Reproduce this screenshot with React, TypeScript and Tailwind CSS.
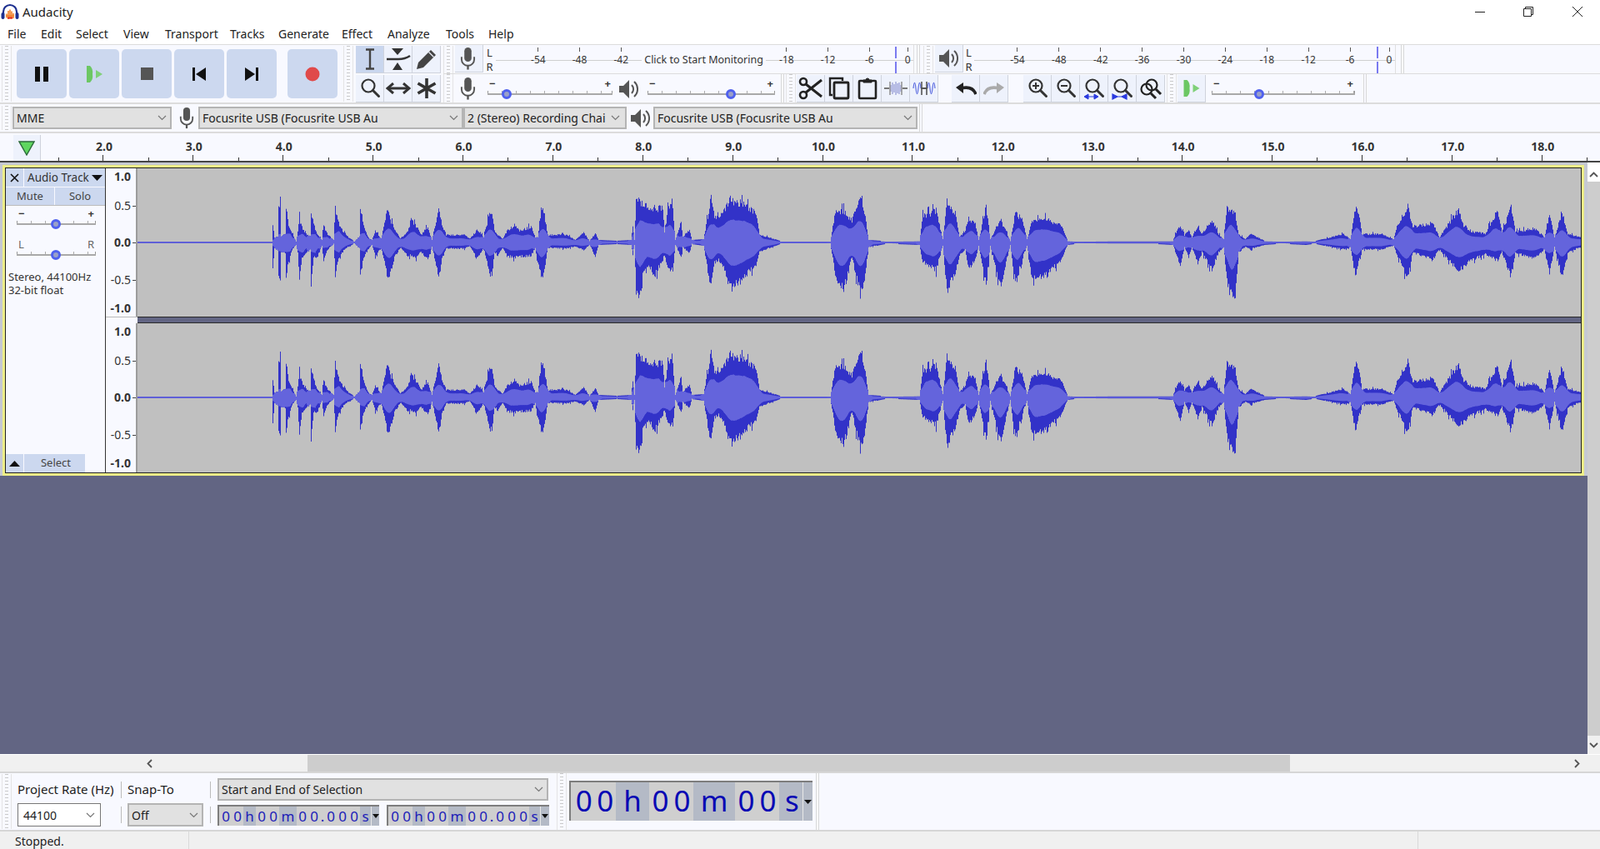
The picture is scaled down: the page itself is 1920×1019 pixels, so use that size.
import React, { useMemo } from "react";

const PTS: number[][] = [
  [0,1,1],[161,1,1],[162,24,31],[164,6,8],[168,8,10],[169,49,48],[171,49,48],[172,8,12],[177,12,14],[178,47,48],[181,22,25],[185,12,10],[190,1,3],[192,15,15],[194,32,46],[197,20,22],[201,12,15],[207,8,10],[208,40,47],[211,25,20],[215,12,20],[221,3,4],[223,23,23],[227,12,10],[235,3,2],[237,46,45],[241,25,20],[249,10,8],[260,1,1],[266,8,8],[267,47,46],[271,22,20],[277,6,8],[281,3,3],
  [285,15,17],[292,5,8],[297,30,28],[300,48,48],[303,30,40],[308,18,20],[315,5,7],[323,13,17],[329,28,18],[335,20,20],[340,10,12],[348,21,23],[353,3,5],[361,45,48],[365,25,23],[370,10,8],[392,10,8],[398,5,5],[408,17,20],[415,7,8],[422,38,40],[425,39,45],[428,15,13],[432,10,17],[438,5,7],[443,15,18],[452,23,20],[458,15,18],[472,21,18],[477,7,7],[480,7,30],[484,45,42],[487,42,45],[492,10,7],[515,10,8],[525,3,5],[535,13,10],[542,2,3],[549,12,18],[553,3,3],[575,2,2],
  [592,3,3],[594,22,16],[596,3,3],[598,60,66],[604,52,68],[606,49,43],[614,47,31],[620,46,44],[630,44,24],[632,14,16],[637,49,38],[642,46,36],[645,3,3],[652,27,19],[654,7,6],[662,17,14],[665,3,2],[679,4,4],[685,41,46],[688,64,54],[692,34,26],[697,31,24],[703,41,34],[711,57,61],[725,51,49],[742,39,29],[746,11,13],[756,7,8],[772,1.5,1.5],[831,1.5,1.5],[837,39,43],[847,41,64],[857,29,19],[867,57,69],[873,36,43],[877,3,6],[899,1.5,1.5],[938,2,3],[942,34,26],[958,42,36],[966,4,4],[971,53,63],[982,31,36],[986,7,16],[993,16,9],[997,32,34],[1005,24,24],[1009,3,4],[1018,47,58],[1023,4,4],[1035,31,59],[1047,2,3],[1053,39,56],[1061,31,23],[1067,4,4],[1073,27,46],[1090,31,44],[1108,22,23],[1116,2,3],[1128,1.5,1.5],
  [1171,2,2],[1188,2,2],[1224,2,2],[1242,2,3],[1248,19,21],[1251,21,31],[1256,9,6],[1261,17,19],[1265,7,6],[1272,23,29],[1277,11,13],[1289,30,36],[1297,11,13],[1303,4,6],[1307,51,49],[1311,41,70],[1317,37,69],[1321,11,13],[1329,4,6],[1335,12,9],[1352,2,3],[1372,1.5,1.5],[1402,2,3],[1412,1.5,1.5],[1447,11,9],[1455,4,6],[1461,44,43],[1465,42,26],[1469,11,9],[1493,11,9],[1507,4,4],[1511,22,16],[1524,47,48],[1530,21,13],[1554,26,23],[1562,7,9],[1585,44,38],[1590,24,33],[1601,14,23],[1617,12,16],[1632,42,24],[1637,14,13],[1648,46,46],[1653,14,14],[1676,19,21],[1688,7,9],[1694,39,43],[1700,6,6],[1709,41,46],[1716,11,13],[1732,7,6],
];

function buildWave() {
  let seed = 12345;
  const rnd = () => {
    seed = (seed * 1103515245 + 12345) & 0x7fffffff;
    return seed / 0x7fffffff;
  };
  const W = 1732;
  const up: number[] = [];
  const down: number[] = [];
  let k = 0;
  for (let x = 0; x < W; x++) {
    while (k < PTS.length - 2 && PTS[k + 1][0] <= x) k++;
    const a = PTS[k];
    const b = PTS[k + 1];
    const t = Math.min(1, (x - a[0]) / Math.max(1, b[0] - a[0]));
    const u = a[1] + (b[1] - a[1]) * t;
    const d = a[2] + (b[2] - a[2]) * t;
    const jag = (v: number) => {
      if (v <= 2) return Math.max(0.8, v * 0.6);
      if (v <= 4) return v;
      const r = rnd();
      const s = r > 0.95 ? 1.15 : 0.8 + 0.2 * rnd();
      return Math.min(v * s, v + 6);
    };
    up.push(jag(u));
    down.push(jag(d));
  }
  const smooth = (arr: number[], i: number) => {
    let s = 0;
    let c = 0;
    for (let j = Math.max(0, i - 5); j <= Math.min(W - 1, i + 5); j++) {
      s += arr[j];
      c++;
    }
    return s / c;
  };
  const cy = 89;
  let outer = "";
  let inner = "";
  for (let i = 0; i < W; i++) {
    outer += `M${i + 0.5} ${(cy - up[i]).toFixed(1)}V${(cy + down[i]).toFixed(1)}`;
    const iu = Math.min(up[i], Math.max(0.8, 0.55 * smooth(up, i)));
    const id = Math.min(down[i], Math.max(0.8, 0.55 * smooth(down, i)));
    inner += `M${i + 0.5} ${(cy - iu).toFixed(1)}V${(cy + id).toFixed(1)}`;
  }
  return { outer, inner };
}

function Wave({ h }: { h: number }) {
  const { outer, inner } = useMemo(buildWave, []);
  return (
    <svg width="1732" height={h} className="block bg-[#c0c0c0]">
      <path d={outer} stroke="#3232c8" strokeWidth="1" fill="none" />
      <path d={inner} stroke="#6464dc" strokeWidth="1" fill="none" />
    </svg>
  );
}

function Grip({ className = "" }: { className?: string }) {
  return (
    <div className={`w-[12px] shrink-0 px-[3px] border-x border-[#e4e4e4] bg-[repeating-linear-gradient(to_bottom,#c9c9c9_0,#c9c9c9_1px,transparent_1px,transparent_4px)] bg-clip-content ${className}`} />
  );
}

function Sep({ className = "" }: { className?: string }) {
  return <div className={`w-[4px] shrink-0 self-stretch border-x border-[#d8d8d8] ${className}`} />;
}

function Transport({ children, className = "" }: { children: React.ReactNode; className?: string }) {
  return <div className={`w-[60px] h-[59px] rounded-[5px] bg-[#ccd8ef] flex items-center justify-center shrink-0 ${className}`}>{children}</div>;
}

function Btn({ children, active, w = "w-[34px]" }: { children: React.ReactNode; active?: boolean; w?: string }) {
  return (
    <div className={`${w} h-[33px] shrink-0 flex items-center justify-center border-b border-r border-[#cfd3dc] ${active ? "bg-[#c9d6ee]" : "bg-[#eef2fc]"}`}>
      {children}
    </div>
  );
}

const Mic = ({ s = 1 }: { s?: number }) => (
  <svg width={20 * s} height={30 * s} viewBox="0 0 20 30" fill="none">
    <rect x="5.5" y="1" width="9" height="18" rx="4.5" fill="#555" />
    <path d="M2 13v3a8 8 0 0 0 16 0v-3" stroke="#555" strokeWidth="2" />
    <path d="M10 24v5" stroke="#555" strokeWidth="2.5" />
  </svg>
);

const Spk = () => (
  <svg width="24" height="26" viewBox="0 0 24 26" fill="none">
    <path d="M1 9h5l7-7v22l-7-7H1z" fill="#555" />
    <path d="M16 8a7 7 0 0 1 0 10M19 4a12 12 0 0 1 0 18" stroke="#555" strokeWidth="2" />
  </svg>
);

const PlayGreen = ({ small }: { small?: boolean }) => (
  <svg width={small ? 22 : 21} height="24" viewBox="0 0 21 24">
    <path d="M1 2h4a8 10 0 0 1 3 10 8 10 0 0 1-3 10H1z" fill="#6cc764" />
    <path d="M12 7l8 5-8 5z" fill="#7fd078" />
  </svg>
);

const Mag = ({ children, under }: { children?: React.ReactNode; under?: React.ReactNode }) => (
  <svg width="28" height="28" viewBox="0 0 28 28" fill="none">
    <circle cx="12" cy="11" r="7.5" stroke="#333" strokeWidth="2.2" />
    <path d="M17.5 16.5l7 7" stroke="#333" strokeWidth="3" strokeLinecap="round" />
    {children}
    {under}
  </svg>
);

function Slider({ w, knob, minus = "−", plus = "+", thin }: { w: number; knob: number; minus?: string; plus?: string; thin?: boolean }) {
  const ticks: number[] = [];
  for (let i = 1; i * 17 < w; i++) ticks.push(i * 17);
  return (
    <div className="flex flex-col shrink-0" style={{ width: w }}>
      <div className={`h-[14px] flex justify-between px-[2px] text-[13px] leading-[14px] ${thin ? "font-normal text-[#666]" : "font-bold text-[#333]"}`}>
        <span>{minus}</span>
        <span>{plus}</span>
      </div>
      <svg width={w} height="13" className="block">
        <path d={`M0.5 2V5M${w - 0.5} 2V5`} stroke="#999" />
        {ticks.map((t) => (
          <path key={t} d={`M${t}.5 2V5`} stroke="#aaa" />
        ))}
        <path d={`M0 6H${w}`} stroke="#a9a9a9" strokeWidth="2" />
        <circle cx={knob} cy="6" r="4.5" fill="#9aa0c8" stroke="#4f60ee" strokeWidth="3" />
      </svg>
    </div>
  );
}

function Meter({ pad, pitch, width, items, gap, label }: { pad: number; pitch: number; width: number; items: string[]; gap: number; label?: boolean }) {
  const Cell = ({ t }: { t: string }) => (
    <div className="flex flex-col items-center shrink-0" style={{ width: pitch }}>
      <div className="w-px h-[5px] mt-[3px] bg-[#555]" />
      <span className="mt-[3px] text-[12px] leading-[14px] text-[#333]">{t}</span>
    </div>
  );
  return (
    <div className="relative flex shrink-0 h-[34px] border-r border-[#e0e0e0]" style={{ width, paddingLeft: pad }}>
      <div className="absolute left-0 right-0 top-[18px] h-px bg-[#cfcfcf]" />
      {items.map((t, i) =>
        t === "LABEL" && label ? (
          <div key={i} className="w-[149px] shrink-0 flex items-center justify-center relative">
            <span className="bg-[#f8f9ff] px-[3px] text-[12.5px] leading-[18px] mt-[1px] text-[#333] whitespace-nowrap">Click to Start Monitoring</span>
          </div>
        ) : (
          <div key={i} className="relative">
            <Cell t={t} />
          </div>
        )
      )}
      <div className="flex flex-col justify-between h-[32px] mt-[2px] shrink-0" style={{ marginLeft: gap }}>
        <div className="w-[2px] h-[14px] bg-[#7a7af0]" />
        <div className="w-[2px] h-[14px] bg-[#7a7af0]" />
      </div>
      <div className="relative flex flex-col items-center w-[20px] ml-[3px] shrink-0">
        <div className="w-px h-[5px] mt-[3px] bg-[#555]" />
        <span className="mt-[3px] text-[12px] leading-[14px] text-[#333]">0</span>
      </div>
    </div>
  );
}

const Chevron = ({ c = "#777" }: { c?: string }) => (
  <svg width="11" height="7" viewBox="0 0 11 7" fill="none" className="shrink-0">
    <path d="M1 1l4.5 4.5L10 1" stroke={c} strokeWidth="1.2" />
  </svg>
);

function Combo({ text, className, pad = "pr-[4px]" }: { text: string; className: string; pad?: string }) {
  return (
    <div className={`flex items-center h-[27px] shrink-0 bg-[#e1e1e1] border-2 border-[#b4b4b4] text-[14px] text-[#222] pl-[3px] ${pad} ${className}`}>
      <span className="flex-1 overflow-hidden whitespace-nowrap">{text}</span>
      <Chevron />
    </div>
  );
}

function VRuler() {
  const Row = ({ t, b, tick, mt }: { t: string; b?: boolean; tick?: boolean; mt: string }) => (
    <div className={`h-[20px] flex items-center justify-end ${mt}`}>
      <span className={`text-[14px] leading-[20px] text-[#333] ${b ? "font-bold" : ""}`}>{t}</span>
      <div className={`w-[4px] h-px ml-[2px] ${tick ? "bg-[#444]" : ""}`} />
    </div>
  );
  return (
    <div className="w-[38px] shrink-0 flex flex-col bg-[#f8f9ff] border-r-2 border-[#9c9c9c]">
      <Row t="1.0" b mt="" />
      <Row t="0.5" tick mt="mt-[15px]" />
      <Row t="0.0" b tick mt="mt-[24px]" />
      <Row t="-0.5" tick mt="mt-[25px]" />
      <Row t="-1.0" b mt="mt-[14px]" />
    </div>
  );
}

function MiniTimer({ className = "" }: { className?: string }) {
  const light = "bg-[#cfcfcf]";
  const dark = "bg-[#b4bac6]";
  const d = "w-[14px] text-center";
  return (
    <div className={`flex h-[25px] shrink-0 border-t-2 border-l-2 border-[#7d7d7d] bg-[#cfcfcf] text-[17px] leading-[23px] text-[#2020b8] ${className}`}>
      <div className={`${light} flex pl-[1px]`}><span className={d}>0</span><span className={d}>0</span></div>
      <div className={`${dark} w-[15px] text-center`}>h</div>
      <div className={`${light} flex`}><span className={d}>0</span><span className={d}>0</span></div>
      <div className={`${dark} w-[21px] text-center`}>m</div>
      <div className={`${light} flex`}><span className={d}>0</span><span className={d}>0</span><span className="w-[6px] text-center">.</span><span className={d}>0</span><span className={d}>0</span><span className={d}>0</span></div>
      <div className={`${dark} w-[13px] text-center`}>s</div>
      <div className={`${dark} flex-1 flex items-center justify-center border-l border-[#e8e8e8]`}>
        <svg width="8" height="5" viewBox="0 0 8 5"><path d="M0 0h8L4 5z" fill="#111" /></svg>
      </div>
    </div>
  );
}

export default function App() {
  const rulerNums = Array.from({ length: 17 }, (_, i) => `${i + 2}.0`);
  return (
    <div className="w-[1920px] h-[1019px] overflow-hidden flex flex-col bg-[#f8f9ff] font-[family-name:'Liberation_Sans',Arial,sans-serif] text-[#222]">
      {/* Title bar */}
      <div className="h-[28px] shrink-0 bg-white flex items-center">
        <svg width="22" height="20" viewBox="0 0 22 20" className="ml-[1px]" fill="none">
          <path d="M3 13V10a8 8 0 0 1 16 0v3" stroke="#1c2f8f" strokeWidth="2.2" />
          <rect x="0.5" y="11" width="4" height="8" rx="2" fill="#1c2f8f" />
          <rect x="17.5" y="11" width="4" height="8" rx="2" fill="#1c2f8f" />
          <path d="M6 15h10M7 12.5v5M9 9v10M11 7.5v11M13 9.5v9M15 12v6" stroke="#f0802a" strokeWidth="1.6" />
          <path d="M8 17.5h6" stroke="#e02a20" strokeWidth="2" />
        </svg>
        <span className="ml-[4px] text-[15px] text-[#222]">Audacity</span>
        <div className="flex-1" />
        <svg width="12" height="12" viewBox="0 0 12 12" className="mr-[46px]"><path d="M0 6.5h12" stroke="#222" /></svg>
        <svg width="12" height="12" viewBox="0 0 12 12" fill="none" className="mr-[47px]"><path d="M2.5 2.5V.5h9v9h-2M.5 2.5h9v9h-9z" stroke="#222" /></svg>
        <svg width="12" height="12" viewBox="0 0 12 12" className="mr-[21px]"><path d="M0 0l12 12M12 0L0 12" stroke="#222" /></svg>
      </div>
      {/* Menu */}
      <div className="h-[26px] shrink-0 bg-white border-b border-[#dcdcdc] relative flex items-center text-[14px] text-[#222]">
        {[
          ["File", "w-[40px] ml-[9px]"],
          ["Edit", "w-[42px]"],
          ["Select", "w-[57px]"],
          ["View", "w-[50px]"],
          ["Transport", "w-[78px]"],
          ["Tracks", "w-[58px]"],
          ["Generate", "w-[76px]"],
          ["Effect", "w-[55px]"],
          ["Analyze", "w-[70px]"],
          ["Tools", "w-[51px]"],
          ["Help", "w-[40px]"],
        ].map(([t, c]) => (
          <span key={t} className={c}>{t}</span>
        ))}
      </div>
      {/* Toolbars */}
      <div className="h-[69px] shrink-0 flex">
        <Grip className="ml-[2px] my-[1px]" />
        <div className="flex items-center ml-[6px] gap-[3px]">
          <Transport>
            <svg width="16" height="18" viewBox="0 0 16 18"><path d="M0 0h6v18H0zM10 0h6v18h-6z" fill="#111" /></svg>
          </Transport>
          <Transport><PlayGreen /></Transport>
          <Transport>
            <svg width="15" height="15"><rect width="15" height="15" fill="#555" /></svg>
          </Transport>
          <Transport>
            <svg width="16" height="16" viewBox="0 0 16 16"><path d="M0 0h3v16H0zM16 0v16L4 8z" fill="#111" /></svg>
          </Transport>
          <Transport>
            <svg width="16" height="16" viewBox="0 0 16 16"><path d="M13 0h3v16h-3zM0 0v16l12-8z" fill="#111" /></svg>
          </Transport>
          <Transport className="ml-[10px]">
            <svg width="18" height="18"><circle cx="9" cy="9" r="8.5" fill="#e04a4a" /></svg>
          </Transport>
        </div>
        <Grip className="ml-[7px] my-[1px]" />
        <div className="ml-[3px] flex flex-col pt-[1px] gap-[2px] shrink-0">
          <div className="flex">
            <Btn active>
              <svg width="16" height="26" viewBox="0 0 16 26" fill="none"><path d="M3 1.5h10M3 24.5h10M8 1.5v23" stroke="#444" strokeWidth="2.4" /></svg>
            </Btn>
            <Btn>
              <svg width="30" height="28" viewBox="0 0 30 28"><path d="M7 1h14l-7 8zM8 27l6-9 6 9z" fill="#333" /><path d="M1 14h14q8 0 14-4" stroke="#333" strokeWidth="2.6" fill="none" /></svg>
            </Btn>
            <Btn>
              <svg width="26" height="26" viewBox="0 0 26 26"><path d="M1 25l2-8L18 2l6 6L9 23z" fill="#444" /><path d="M15.5 4.5l6 6" stroke="#eef2fc" strokeWidth="1.2" /></svg>
            </Btn>
          </div>
          <div className="flex">
            <Btn><Mag /></Btn>
            <Btn>
              <svg width="30" height="14" viewBox="0 0 30 14" fill="none"><path d="M3 7h24" stroke="#333" strokeWidth="3" /><path d="M9 1L2 7l7 6M21 1l7 6-7 6" stroke="#333" strokeWidth="3" /></svg>
            </Btn>
            <Btn>
              <svg width="26" height="26" viewBox="0 0 26 26"><path d="M13 1v24M2.5 7l21 12M23.5 7l-21 12" stroke="#333" strokeWidth="3.6" /></svg>
            </Btn>
          </div>
        </div>
        <div className="ml-[3px] flex-1 flex flex-col min-w-0">
          {/* Row 1 */}
          <div className="h-[35px] shrink-0 flex border-b border-[#dcdcdc]">
            <Grip className="mt-[1px]" />
            <div className="ml-[2px]"><Btn><span className="pr-[2px] flex"><Mic s={0.95} /></span></Btn></div>
            <div className="w-[15px] shrink-0 flex flex-col items-center text-[13px] leading-[17px] pt-[1px] text-[#333]">
              <span>L</span>
              <span>R</span>
            </div>
            <Meter pad={26} pitch={49.7} width={502} gap={6} label items={["-54", "-48", "-42", "LABEL", "-18", "-12", "-6"]} />
            <Sep className="ml-[3px]" />
            <Grip className="ml-[4px] mt-[1px]" />
            <div className="ml-[2px]"><Btn><span className="pr-[2px] flex"><Spk /></span></Btn></div>
            <div className="w-[13px] shrink-0 flex flex-col items-center text-[13px] leading-[17px] pt-[1px] text-[#333]">
              <span>L</span>
              <span>R</span>
            </div>
            <Meter pad={27} pitch={49.9} width={506} gap={7} items={["-54", "-48", "-42", "-36", "-30", "-24", "-18", "-12", "-6"]} />
            <Sep className="ml-[6px]" />
          </div>
          {/* Row 2 */}
          <div className="h-[34px] shrink-0 flex">
            <Grip />
            <div className="w-[34px] ml-[2px] flex items-center justify-center shrink-0 pr-[3px] mt-[1px]"><Mic s={0.95} /></div>
            <div className="ml-[5px] mt-[4px]"><Slider w={150} knob={23} /></div>
            <div className="ml-[7px] flex items-center shrink-0 mt-[1px]"><Spk /></div>
            <div className="ml-[11px] mt-[4px]"><Slider w={153} knob={100} /></div>
            <Sep className="ml-[7px]" />
            <Grip className="ml-[2px]" />
            <div className="ml-[1px] mt-[1px] flex shrink-0">
              <Btn>
                <svg width="30" height="28" viewBox="0 0 30 28" fill="none"><circle cx="6" cy="6" r="4" stroke="#222" strokeWidth="2.6" /><circle cx="6" cy="22" r="4" stroke="#222" strokeWidth="2.6" /><path d="M9 9l19 15M9 19L28 4" stroke="#222" strokeWidth="3" /></svg>
              </Btn>
              <Btn>
                <svg width="26" height="28" viewBox="0 0 26 28" fill="none"><path d="M5 22H2V2h15v3" stroke="#222" strokeWidth="2.4" /><rect x="7" y="7" width="17" height="19" rx="1" stroke="#222" strokeWidth="2.8" /></svg>
              </Btn>
              <Btn>
                <svg width="24" height="28" viewBox="0 0 24 28" fill="none"><rect x="2" y="5" width="20" height="21" rx="1" stroke="#222" strokeWidth="2.6" /><path d="M7 7V4h3a2 2 0 0 1 4 0h3v3z" fill="#222" stroke="#222" /></svg>
              </Btn>
              <Btn>
                <svg width="28" height="20" viewBox="0 0 28 20" fill="none"><path d="M0 10h6M22 10h6" stroke="#777" strokeWidth="2" /><path d="M8 6v8M10 3v14M12 5v10M14 2v16M16 4v12M18 3v14M20 6v8" stroke="#9a9fd8" strokeWidth="1.3" /><path d="M7 2v16M21 2v16" stroke="#888" strokeWidth="1.4" /></svg>
              </Btn>
              <Btn>
                <svg width="28" height="20" viewBox="0 0 28 20" fill="none"><path d="M1 10c1-9 2-9 3 0s2 9 3 0 2-9 3 0M18 10c1-9 2-9 3 0s2 9 3 0 2-9 3 0" stroke="#5a6ae0" strokeWidth="1.2" /><path d="M10 10h8" stroke="#555" strokeWidth="2" /><path d="M11 2v16M17 2v16" stroke="#555" strokeWidth="1.6" /></svg>
              </Btn>
            </div>
            <div className="ml-[16px] mt-[1px] flex shrink-0">
              <Btn>
                <svg width="26" height="18" viewBox="0 0 26 18" fill="none"><path d="M25 16c-3-8-10-9-18-7" stroke="#222" strokeWidth="3.6" /><path d="M10 2L1 8l9 7z" fill="#222" /></svg>
              </Btn>
              <Btn>
                <svg width="26" height="18" viewBox="0 0 26 18" fill="none"><path d="M1 16c3-8 10-9 18-7" stroke="#aaa" strokeWidth="3.6" /><path d="M16 2l9 6-9 7z" fill="#aaa" /></svg>
              </Btn>
            </div>
            <div className="ml-[18px] mt-[1px] flex shrink-0">
              <Btn><Mag><path d="M8 11h8M12 7v8" stroke="#333" strokeWidth="2" /></Mag></Btn>
              <Btn><Mag><path d="M8 11h8" stroke="#333" strokeWidth="2" /></Mag></Btn>
              <Btn><Mag under={<path d="M3 24h15M7 21l-5 3 5 3zM14 21l5 3-5 3z" fill="#2b3be0" stroke="#2b3be0" strokeWidth="1" />} /></Btn>
              <Btn><Mag under={<path d="M2 21v6M19 21v6M2 24h17M2 21l6 3-6 3zM19 21l-6 3 6 3z" fill="#2b3be0" stroke="#2b3be0" strokeWidth="1.2" />} /></Btn>
              <Btn>
                <svg width="28" height="28" viewBox="0 0 28 28" fill="none"><circle cx="15" cy="10" r="6.5" stroke="#222" strokeWidth="2.2" /><circle cx="9" cy="15" r="6.5" stroke="#222" strokeWidth="2.2" /><path d="M20 15l6 6M14 20l6 6" stroke="#222" strokeWidth="3" /></svg>
              </Btn>
            </div>
            <Grip className="ml-[2px]" />
            <div className="ml-[1px] mt-[1px]"><Btn><PlayGreen small /></Btn></div>
            <div className="ml-[7px] mt-[4px]"><Slider w={172} knob={57} /></div>
            <Sep className="ml-[10px]" />
          </div>
        </div>
      </div>
      <div className="h-[2px] shrink-0 bg-[#dcdcdc]" />
      {/* Device row */}
      <div className="h-[33px] shrink-0 flex items-center">
        <Grip className="ml-[2px] self-stretch my-[2px]" />
        <Combo text="MME" className="w-[191px] ml-[1px]" />
        <div className="w-[19px] ml-[8px] flex justify-center shrink-0"><Mic s={0.9} /></div>
        <Combo text="Focusrite USB (Focusrite USB Au" className="w-[318px] ml-[5px]" />
        <Combo text="2 (Stereo) Recording Chai" className="w-[196px]" pad="pr-[6px] gap-[4px]" />
        <div className="ml-[4px] shrink-0"><Spk /></div>
        <Combo text="Focusrite USB (Focusrite USB Au" className="w-[317px] ml-[4px]" />
        <Sep className="ml-[2px]" />
      </div>
      <div className="h-[2px] shrink-0 bg-[#dcdcdc]" />
      {/* Ruler */}
      <div className="h-[33px] shrink-0 flex relative">
        <div className="w-[70px] shrink-0 pl-[16px] pt-[2px]">
          <div className="w-[33px] h-[31px] bg-[#eef2fc] border-r border-[#cfd3dc] flex items-center justify-center">
            <svg width="20" height="18" viewBox="0 0 20 18"><path d="M1 1h18L10 17z" fill="#5fd65f" stroke="#2c6a3a" strokeWidth="1.4" /></svg>
          </div>
        </div>
        {rulerNums.map((t) => (
          <div key={t} className="w-[107.9px] shrink-0 relative flex flex-col items-center">
            <span className="mt-[7px] ml-[2px] h-[17px] text-[14px] leading-[17px] font-bold text-[#333]">{t}</span>
            <div className="mt-[2px] w-px h-[7px] bg-[#333]" />
            <div className="absolute left-0 bottom-0 w-px h-[4px] bg-[#333]" />
          </div>
        ))}
        <div className="w-px h-[4px] self-end bg-[#333]" />
      </div>
      <div className="h-[2px] shrink-0 bg-[#444]" />
      {/* Track area */}
      <div className="flex-1 min-h-0 flex">
        <div className="flex-1 min-w-0 flex flex-col bg-[#626583]">
          <div className="shrink-0 bg-[#c5c8d2] pt-[3px] pl-[3px] pr-[4px]">
            <div className="border-[3px] border-[#eeee88] bg-[#f8f9ff]">
              <div className="border border-[#222] flex h-[367px]">
                {/* Control panel */}
                <div className="w-[119px] shrink-0 flex flex-col text-[13px] text-[#444] border-r-0">
                  <div className="h-[22px] flex shrink-0 gap-[1px]">
                    <div className="w-[21px] bg-[#ccd8ef] flex items-center justify-center">
                      <svg width="11" height="11" viewBox="0 0 11 11"><path d="M1 1l9 9M10 1l-9 9" stroke="#111" strokeWidth="1.6" /></svg>
                    </div>
                    <div className="flex-1 bg-[#ccd8ef] flex items-center pl-[4px] whitespace-nowrap text-[#333] text-[13.5px]">
                      Audio Track
                      <svg width="13" height="7" viewBox="0 0 13 7" className="ml-[3px]"><path d="M0 0h13L6.500 7z" fill="#111" /></svg>
                    </div>
                  </div>
                  <div className="h-[21px] mt-[1px] flex shrink-0 gap-[1px]">
                    <div className="w-[58px] bg-[#ccd8ef] flex items-center justify-center">Mute</div>
                    <div className="flex-1 bg-[#ccd8ef] flex items-center justify-center">Solo</div>
                  </div>
                  <div className="border-t border-[#bbb]" />
                  <div className="ml-[13px] mt-[2px]"><Slider w={95} knob={47} /></div>
                  <div className="ml-[13px] mt-[10px]"><Slider w={95} knob={47} minus="L" plus="R" thin /></div>
                  <div className="ml-[3px] mt-[11px] leading-[16px] text-[#333]">
                    <div>Stereo, 44100Hz</div>
                    <div>32-bit float</div>
                  </div>
                  <div className="flex-1" />
                  <div className="h-[22px] flex shrink-0 gap-[1px]">
                    <div className="w-[21px] bg-[#ccd8ef] flex items-center justify-center">
                      <svg width="13" height="7" viewBox="0 0 13 7"><path d="M0 7h13L6.500 0z" fill="#111" /></svg>
                    </div>
                    <div className="w-[73px] bg-[#ccd8ef] flex items-center justify-center pl-[3px]">Select</div>
                  </div>
                </div>
                <div className="w-px shrink-0 bg-[#333]" />
                {/* Channels */}
                <div className="flex-1 min-w-0 flex flex-col">
                  <div className="flex h-[178px] shrink-0">
                    <VRuler />
                    <Wave h={178} />
                  </div>
                  <div className="flex h-[8px] shrink-0">
                    <div className="w-[38px] border-t border-[#bbb] bg-[#f8f9ff] shrink-0" />
                    <div className="flex-1 bg-[#626583] border-y border-[#2a2a2a]" />
                  </div>
                  <div className="flex h-[179px] shrink-0">
                    <VRuler />
                    <Wave h={179} />
                  </div>
                </div>
              </div>
            </div>
          </div>
          <div className="flex-1" />
        </div>
        <div className="w-[15px] shrink-0 bg-[#f0f0f0] flex flex-col">
          <div className="h-[23px] flex items-end justify-center pb-[5px] bg-white">
            <svg width="11" height="7" viewBox="0 0 11 7" fill="none"><path d="M1 6l4.5-4.500L10 6" stroke="#555" strokeWidth="1.800" /></svg>
          </div>
          <div className="flex-1 bg-[#cdcdcd]" />
          <div className="h-[22px] flex items-center justify-center bg-[#f0f0f0]">
            <svg width="11" height="7" viewBox="0 0 11 7" fill="none"><path d="M1 1l4.500 4.500L10 1" stroke="#555" strokeWidth="1.800" /></svg>
          </div>
        </div>
      </div>
      {/* Horizontal scrollbar */}
      <div className="h-[21px] shrink-0 border-t border-white flex bg-[#f0f0f0]">
        <div className="w-[369px] shrink-0 flex items-center pl-[176px]">
          <svg width="7" height="11" viewBox="0 0 7 11" fill="none"><path d="M6 1L1.500 5.500 6 10" stroke="#555" strokeWidth="1.800" /></svg>
        </div>
        <div className="w-[1179px] shrink-0 bg-[#cdcdcd]" />
        <div className="flex-1 flex items-center justify-end pr-[24px]">
          <svg width="7" height="11" viewBox="0 0 7 11" fill="none"><path d="M1 1l4.500 4.500L1 10" stroke="#555" strokeWidth="1.800" /></svg>
        </div>
      </div>
      <div className="h-[2px] shrink-0 bg-[#d6d6d6]" />
      {/* Selection toolbar */}
      <div className="h-[68px] shrink-0 flex">
        <Grip className="ml-[2px] my-[1px]" />
        <div className="flex flex-col ml-[7px] pt-[6px] w-[638px] shrink-0">
          <div className="flex items-center h-[27px] text-[15px] text-[#222]">
            <span className="w-[124px] shrink-0 whitespace-nowrap">Project Rate (Hz)</span>
            <div className="w-px h-[20px] bg-[#bbb] shrink-0" />
            <span className="ml-[7px] w-[99px] shrink-0">Snap-To</span>
            <div className="w-px h-[20px] bg-[#bbb] shrink-0" />
            <Combo text="Start and End of Selection" className="ml-[8px] w-[397px]" />
          </div>
          <div className="flex items-center h-[28px] mt-[3px]">
            <div className="w-[100px] h-[28px] shrink-0 bg-white border border-[#777] flex items-center pl-[6px] pr-[6px] text-[14px]">
              <span className="flex-1">44100</span>
              <Chevron />
            </div>
            <div className="ml-[24px] w-px h-[20px] bg-[#bbb] shrink-0" />
            <Combo text="Off" className="ml-[7px] w-[91px] h-[28px]" />
            <div className="ml-[8px] w-px h-[20px] bg-[#bbb] shrink-0" />
            <MiniTimer className="ml-[8px] w-[194px]" />
            <MiniTimer className="ml-[9px] w-[195px]" />
          </div>
        </div>
        <Grip className="ml-[9px]" />
        <div className="ml-[3px] mt-[9px] w-[292px] h-[48px] shrink-0 border-t-2 border-l-2 border-[#7d7d7d] flex text-[35px] leading-[44px] text-[#0808b4] bg-[#cfcfcf] pl-[3px]">
          <div className="w-[51px] flex bg-[#cfcfcf]"><span className="w-[26px] text-center">0</span><span className="w-[26px] text-center">0</span></div>
          <div className="w-[40px] text-center bg-[#b4bac6]">h</div>
          <div className="w-[53px] flex justify-center bg-[#cfcfcf]"><span className="w-[26px] text-center">0</span><span className="w-[26px] text-center">0</span></div>
          <div className="w-[50px] text-center bg-[#b4bac6]">m</div>
          <div className="w-[53px] flex justify-center bg-[#cfcfcf]"><span className="w-[26px] text-center">0</span><span className="w-[26px] text-center">0</span></div>
          <div className="w-[28px] text-center bg-[#b4bac6] pl-[3px]">s</div>
          <div className="flex-1 bg-[#b4bac6] border-l border-[#e8e8e8] flex items-center justify-center">
            <svg width="9" height="5" viewBox="0 0 9 5"><path d="M0 0h9L4.500 5z" fill="#111" /></svg>
          </div>
        </div>
        <Sep className="ml-[4px]" />
      </div>
      <div className="h-[2px] shrink-0 bg-[#d6d6d6]" />
      {/* Status bar */}
      <div className="h-[21px] shrink-0 flex bg-[#f0f0f0] overflow-hidden">
        <div className="w-[227px] shrink-0 border-r border-[#d9d9d9] pl-[18px] pt-[4px] text-[14px] leading-[15px] text-[#222]">Stopped.</div>
        <div className="w-[1475px] shrink-0 border-r border-[#d9d9d9]" />
      </div>
    </div>
  );
}
